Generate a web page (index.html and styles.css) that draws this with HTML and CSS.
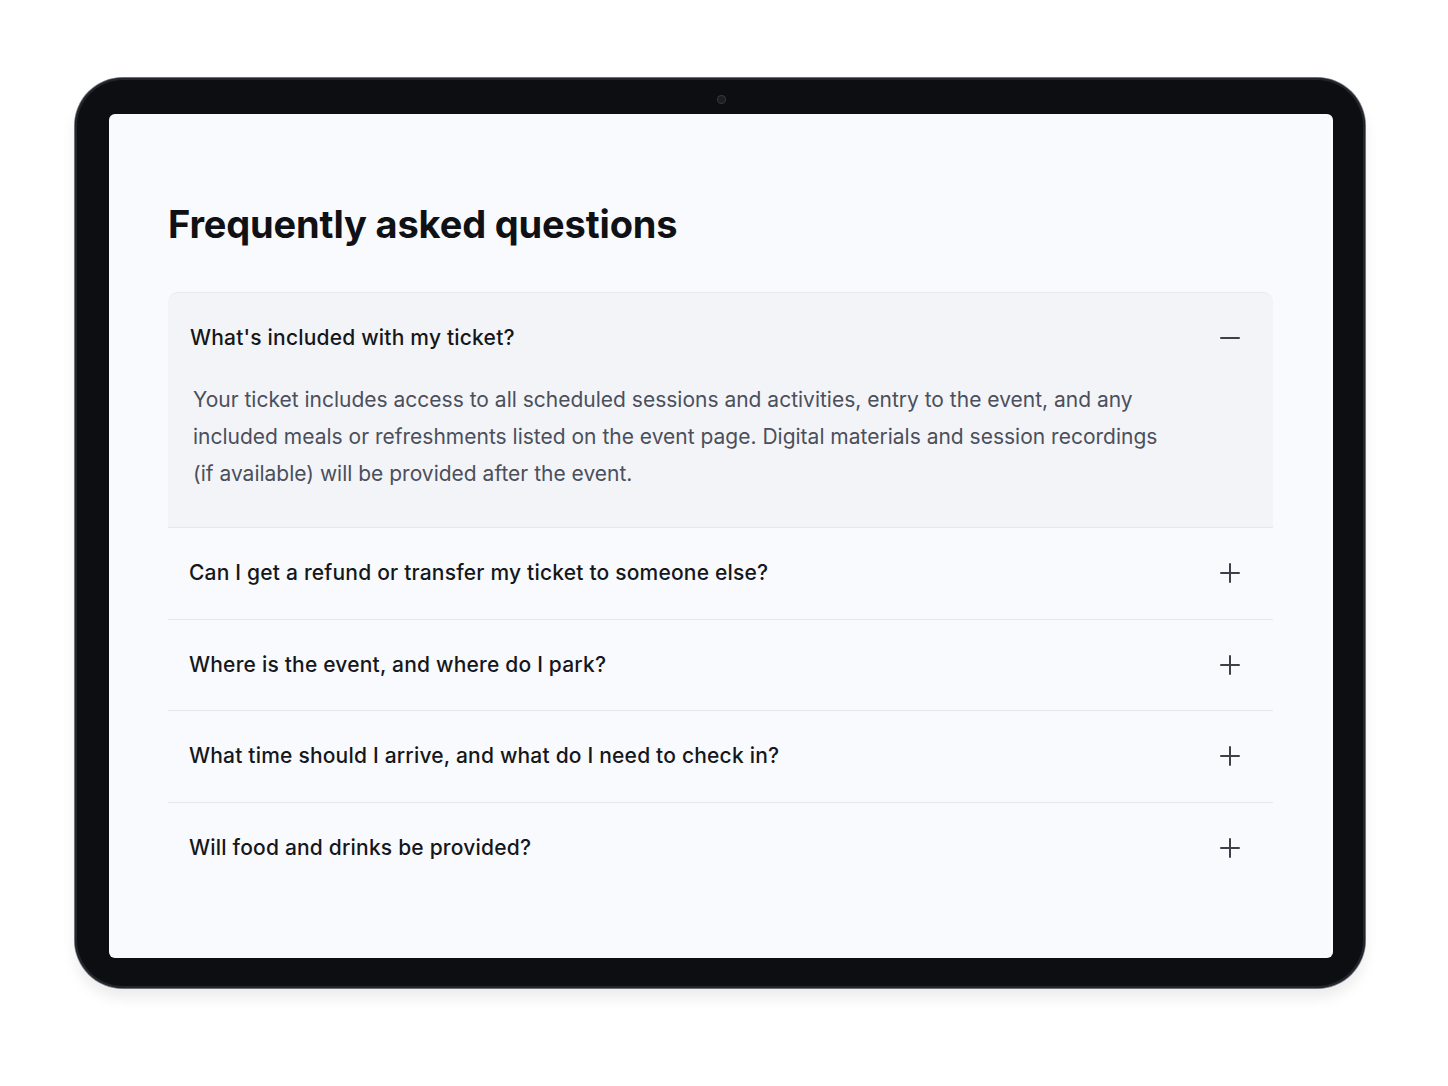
FILE: index.html
```html
<!DOCTYPE html>
<html lang="en">
<head>
<meta charset="utf-8">
<title>FAQ</title>
<link rel="stylesheet" href="styles.css">
</head>
<body>
<div class="device">
  <span class="camera"></span>
  <div class="screen">
    <h1 class="title">Frequently asked questions</h1>
    <div class="faq">
      <div class="item open">
        <div class="question">
          <span class="q-text">What's included with my ticket?</span>
          <svg class="icon" viewBox="0 0 20 20" width="20" height="20"><path d="M1 10H19" /></svg>
        </div>
        <p class="answer">Your ticket includes access to all scheduled sessions and activities, entry to the event, and any included meals or refreshments listed on the event page. Digital materials and session recordings (if available) will be provided after the event.</p>
      </div>
      <div class="item">
        <div class="question">
          <span class="q-text">Can I get a refund or transfer my ticket to someone else?</span>
          <svg class="icon" viewBox="0 0 20 20" width="20" height="20"><path d="M1 10H19M10 1V19" /></svg>
        </div>
      </div>
      <div class="item">
        <div class="question">
          <span class="q-text">Where is the event, and where do I park?</span>
          <svg class="icon" viewBox="0 0 20 20" width="20" height="20"><path d="M1 10H19M10 1V19" /></svg>
        </div>
      </div>
      <div class="item">
        <div class="question">
          <span class="q-text">What time should I arrive, and what do I need to check in?</span>
          <svg class="icon" viewBox="0 0 20 20" width="20" height="20"><path d="M1 10H19M10 1V19" /></svg>
        </div>
      </div>
      <div class="item last">
        <div class="question">
          <span class="q-text">Will food and drinks be provided?</span>
          <svg class="icon" viewBox="0 0 20 20" width="20" height="20"><path d="M1 10H19M10 1V19" /></svg>
        </div>
      </div>
    </div>
  </div>
</div>
</body>
</html>
```
FILE: styles.css
```css
* { box-sizing: border-box; }
html, body { margin: 0; padding: 0; background: #ffffff; }
body {
  font-family: Inter, "Noto Sans", "Liberation Sans", sans-serif;
  width: 1448px;
  height: 1086px;
  overflow: hidden;
}
.device {
  position: relative;
  margin: 78px 0 0 75px;
  width: 1290px;
  height: 910px;
  background: #0d0e11;
  border-radius: 48px;
  padding: 36px 32px 30px 34px;
  box-shadow: 0 0 0 1px #6b6f77, inset 0 0 0 2px #22252b, 0 10px 14px rgba(0,0,0,0.08);
}
.camera {
  position: absolute;
  left: 643px;
  top: 18px;
  width: 7px;
  height: 7px;
  border-radius: 50%;
  background: #1c1e22;
  box-shadow: 0 0 0 1px #34373d;
}
.screen {
  width: 1224px;
  height: 844px;
  background: #f9fafd;
  border-radius: 6px;
  padding: 86px 60px 0 59px;
}
.title {
  margin: 0 0 44px 0;
  font-size: 38px;
  line-height: 48px;
  font-weight: 700;
  color: #101114;
  letter-spacing: -0.15px;
}
.faq { width: 1105px; }
.item {
  border-bottom: 1px solid #e6e7ec;
}
.item.last { border-bottom: none; }
.item.open {
  background: #f3f4f8;
  border-top: 1px solid #e8e9ee;
  border-radius: 10px 10px 0 0;
  padding-bottom: 35px;
}
.question {
  display: flex;
  align-items: center;
  justify-content: space-between;
  height: 90.5px;
  padding: 0 33px 0 21px;
}
.item.open .question {
  height: 59px;
  align-items: flex-end;
  padding-left: 22px;
}
.q-text {
  font-size: 21px;
  line-height: 28px;
  font-weight: 500;
  color: #15171b;
  letter-spacing: 0.2px;
}
.icon {
  fill: none;
  stroke: #3d4048;
  stroke-width: 2;
  stroke-linecap: round;
}
.item.open .icon { margin-bottom: 4px; }
.answer {
  margin: 29px 0 0 0;
  width: 1000px;
  padding: 0 0 0 25px;
  font-size: 21px;
  line-height: 37px;
  color: #4b4f5b;
  letter-spacing: 0;
}
```
